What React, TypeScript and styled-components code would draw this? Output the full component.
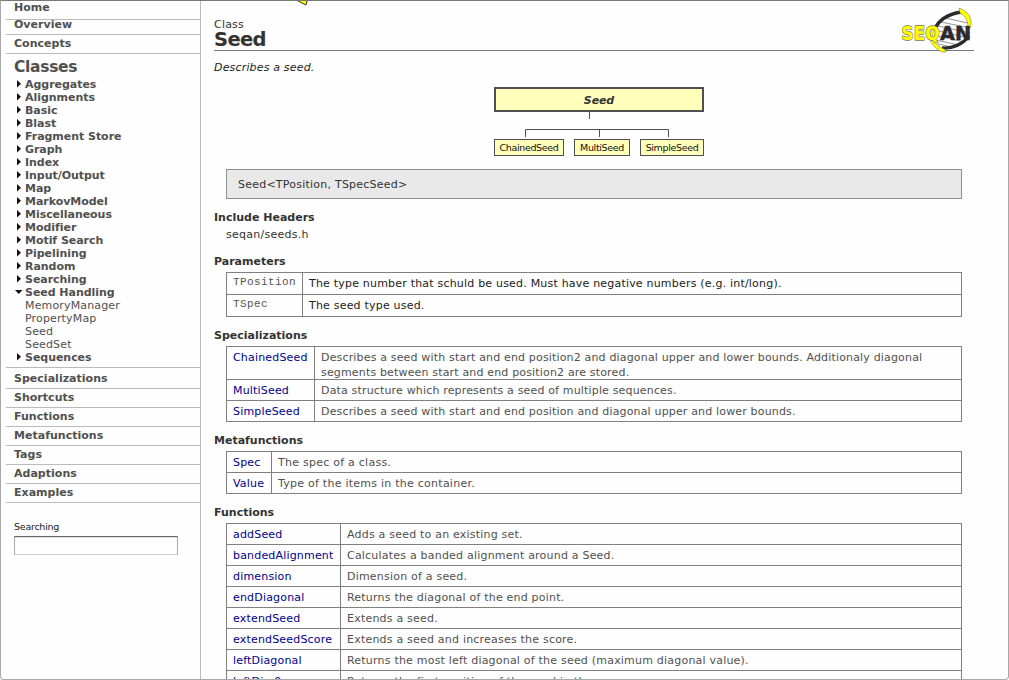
import React from 'react';
import styled, { createGlobalStyle } from 'styled-components';

const GlobalStyle = createGlobalStyle`
  *, *::before, *::after { box-sizing: border-box; }
  body { margin: 0; background: #fff; }
`;

const Frame = styled.div`
  display: flex;
  width: 1009px;
  height: 680px;
  overflow: hidden;
  border: 1px solid #a8a8a8;
  border-top-color: #777;
  border-radius: 0 0 4px 4px;
  background: #fefefe;
  font-family: 'DejaVu Sans', Verdana, sans-serif;
  font-size: 11px;
  color: #333;
  white-space: nowrap;
`;

const Sidebar = styled.nav`
  flex: none;
  width: 200px;
  padding-left: 5px;
  border-right: 1px solid #bbb;
  color: #505050;
`;

const NavLink = styled.div<{ $height?: number; $line?: number }>`
  height: ${(p) => p.$height ?? 19}px;
  padding-left: 8px;
  border-bottom: 1px solid #bbb;
  font-weight: bold;
  line-height: ${(p) => p.$line ?? 18}px;
  letter-spacing: 0.02px;
`;

const NavGroup = styled.div`
  padding: 0 0 3px 8px;
  border-bottom: 1px solid #bbb;
`;

const NavTitle = styled.div`
  height: 24px;
  font-size: 15.5px;
  font-weight: bold;
  line-height: 27px;
  letter-spacing: -0.3px;
`;

const TreeItem = styled.div<{ $leaf?: boolean }>`
  display: flex;
  height: 13px;
  line-height: 13px;
  font-weight: ${(p) => (p.$leaf ? 'normal' : 'bold')};
  letter-spacing: ${(p) => (p.$leaf ? 0.15 : -0.04)}px;
`;

const Marker = styled.svg`
  flex: none;
  width: 11px;
  height: 13px;
  fill: #111;
`;

const SearchForm = styled.label`
  display: block;
  padding: 17px 0 0 8px;
  font-size: 9.5px;
  line-height: 14px;
  letter-spacing: -0.25px;
  color: #222;
`;

const SearchInput = styled.input`
  display: block;
  width: 164px;
  height: 19px;
  margin-top: 2px;
  border: 1px solid #aaa;
  border-top: 1px solid #666;
  border-bottom-color: #ccc;
  background: #fff;
  box-shadow: inset 0 1px 1px #ddd;
  outline: none;
`;

const Main = styled.main`
  flex: none;
  width: 773px;
  padding-left: 13px;
`;

const Header = styled.header`
  position: relative;
  height: 50px;
  padding-top: 18px;
  border-bottom: 1px solid #777;
`;

const Kind = styled.div`
  line-height: 12px;
  letter-spacing: 0.2px;
`;

const Title = styled.h1`
  margin: 0;
  font-size: 19.5px;
  line-height: 17px;
  letter-spacing: -0.65px;
`;

const Logo = styled.svg`
  position: absolute;
  right: -4px;
  top: 3px;
  width: 82px;
  height: 54px;
`;

const ClippedArrow = styled.svg`
  position: absolute;
  left: 83px;
  top: 0;
  width: 12px;
  height: 5px;
`;

const Summary = styled.p`
  margin: 9px 0 11px;
  line-height: 16px;
  font-style: italic;
  letter-spacing: 0.17px;
  color: #222;
`;

const Hierarchy = styled.div`
  width: 210px;
  height: 70px;
  margin-left: 280px;
`;

const BaseClass = styled.div`
  height: 25px;
  border: 2px solid #505050;
  background: #ffb;
  text-align: center;
  font-weight: bold;
  font-style: italic;
  line-height: 23px;
  letter-spacing: -0.1px;
`;

const Connectors = styled.svg`
  display: block;
  width: 210px;
  height: 27px;
  fill: none;
  stroke: #505050;
`;

const Subclasses = styled.div`
  display: flex;
  justify-content: space-between;
`;

const Subclass = styled.div<{ $width: number }>`
  width: ${(p) => p.$width}px;
  height: 17px;
  border: 1px solid #505050;
  background: #ffb;
  text-align: center;
  font-size: 9.5px;
  line-height: 15px;
  letter-spacing: -0.35px;
  color: #111;
`;

const Signature = styled.div`
  width: 736px;
  height: 30px;
  margin: 12px 0 0 12px;
  padding-left: 11px;
  border: 1px solid #909090;
  background: #e9e9e9;
  line-height: 29px;
  letter-spacing: 0.23px;
`;

const Heading = styled.h2`
  margin: 10px 0 3px;
  padding-top: 1px;
  font-size: 11px;
  line-height: 15px;
`;

const HeaderFile = styled.div`
  height: 15px;
  padding-left: 12px;
  line-height: 14px;
  letter-spacing: 0.27px;
`;

const Grid = styled.div`
  width: 736px;
  margin-left: 12px;
  border: solid #808080;
  border-width: 1px 1px 0;
`;

const Row = styled.div<{ $height: number; $first: number }>`
  display: grid;
  grid-template-columns: ${(p) => p.$first}px 1fr;
  height: ${(p) => p.$height}px;
  border-bottom: 1px solid #808080;
`;

const Term = styled.div<{ $code?: boolean }>`
  padding-left: 6px;
  border-right: 1px solid #808080;
  font-family: ${(p) => (p.$code ? "'Liberation Mono', monospace" : 'inherit')};
  line-height: ${(p) => (p.$code ? 18 : 21)}px;
  letter-spacing: ${(p) => (p.$code ? 0.4 : 0.18)}px;
  color: ${(p) => (p.$code ? '#555' : '#000090')};
`;

const Detail = styled.div<{ $spacing: number; $dark?: boolean }>`
  padding: 3px 0 0 6px;
  line-height: 15px;
  letter-spacing: ${(p) => p.$spacing}px;
  color: ${(p) => (p.$dark ? '#222' : '#505050')};
`;

const groups = [
  'Aggregates', 'Alignments', 'Basic', 'Blast', 'Fragment Store', 'Graph', 'Index', 'Input/Output', 'Map',
  'MarkovModel', 'Miscellaneous', 'Modifier', 'Motif Search', 'Pipelining', 'Random', 'Searching',
];
const seedClasses = ['MemoryManager', 'PropertyMap', 'Seed', 'SeedSet'];
const sections = ['Shortcuts', 'Functions', 'Metafunctions', 'Tags', 'Adaptions', 'Examples'];

type Entry = { term: string; text: React.ReactNode; height?: number };

const parameters: Entry[] = [
  { term: 'TPosition', text: 'The type number that schuld be used. Must have negative numbers (e.g. int/long).' },
  { term: 'TSpec', text: 'The seed type used.' },
];
const specializations: Entry[] = [
  {
    term: 'ChainedSeed',
    height: 33,
    text: (
      <>
        Describes a seed with start and end position2 and diagonal upper and lower bounds. Additionaly diagonal
        <br />
        segments between start and end position2 are stored.
      </>
    ),
  },
  { term: 'MultiSeed', text: 'Data structure which represents a seed of multiple sequences.' },
  { term: 'SimpleSeed', text: 'Describes a seed with start and end position and diagonal upper and lower bounds.' },
];
const metafunctions: Entry[] = [
  { term: 'Spec', text: 'The spec of a class.' },
  { term: 'Value', text: 'Type of the items in the container.' },
];
const functions: Entry[] = [
  { term: 'addSeed', text: 'Adds a seed to an existing set.' },
  { term: 'bandedAlignment', text: 'Calculates a banded alignment around a Seed.' },
  { term: 'dimension', text: 'Dimension of a seed.' },
  { term: 'endDiagonal', text: 'Returns the diagonal of the end point.' },
  { term: 'extendSeed', text: 'Extends a seed.' },
  { term: 'extendSeedScore', text: 'Extends a seed and increases the score.' },
  { term: 'leftDiagonal', text: 'Returns the most left diagonal of the seed (maximum diagonal value).' },
  { term: 'leftDim0', text: 'Returns the first position of the seed in the query.' },
];

type TableProps = { entries: Entry[]; first: number; spacing?: number; code?: boolean };

function Table({ entries, first, spacing = 0.21, code }: TableProps) {
  return (
    <Grid>
      {entries.map((e) => (
        <Row key={e.term} $height={e.height ?? (code ? 22 : 21)} $first={first}>
          <Term $code={code}>{e.term}</Term>
          <Detail $dark={code} $spacing={spacing}>{e.text}</Detail>
        </Row>
      ))}
    </Grid>
  );
}

function Branch({ label, open }: { label: string; open?: boolean }) {
  return (
    <TreeItem>
      <Marker viewBox="0 0 11 13">
        <path d={open ? 'M1 4H8.5L4.7 8Z' : 'M3 2L7 5.8L3 9.6Z'} />
      </Marker>
      {label}
    </TreeItem>
  );
}

function SeqAnLogo() {
  return (
    <Logo viewBox="0 0 82 54">
      <path d="M36 30C37 20 47 10 63 8L74 22V31C67 41 57 45 47 44C40 42 36 36 36 30Z" fill="#fff" />
      <path
        d="M49 14L72 19M45 18L74 24M42 22L74 29M39 26L72 34M38 31L68 38M39 36L63 41M42 40L56 43"
        stroke="#777"
        strokeWidth="0.8"
      />
      <path d="M39 25C42 17 51 10 65 8" fill="none" stroke="#2d2a2d" strokeWidth="3.4" />
      <path d="M46 44C56 45 67 40 73 32" fill="none" stroke="#2d2a2d" strokeWidth="3.4" />
      <path d="M63 4C72 7 77 14 74.5 24L72 23C72 17 70 13 64 9Z" fill="#ff0" stroke="#666" strokeWidth="0.5" />
      <path d="M40 23C34 31 36 40 49 45.5L50 48L46 48C34 42 30 32 38 23Z" fill="#ff0" stroke="#666" strokeWidth="0.5" />
      <g fontFamily="'DejaVu Sans'" fontWeight="bold" fontSize="19.5" paintOrder="stroke" strokeLinejoin="round">
        <text x="5.5" y="36" textLength="38" lengthAdjust="spacingAndGlyphs" fill="#ff0" stroke="#77774a" strokeWidth="1.3">SEQ</text>
        <text x="44" y="36" textLength="31" lengthAdjust="spacingAndGlyphs" fill="#2d2a2d" stroke="#2d2a2d" strokeWidth="0.6">AN</text>
      </g>
    </Logo>
  );
}

export default function App() {
  return (
    <>
      <GlobalStyle />
      <Frame>
        <Sidebar>
          <NavLink $line={13}>Home</NavLink>
          <NavLink $height={15} $line={9}>Overview</NavLink>
          <NavLink>Concepts</NavLink>
          <NavGroup>
            <NavTitle>Classes</NavTitle>
            {groups.map((g) => <Branch key={g} label={g} />)}
            <Branch label="Seed Handling" open />
            {seedClasses.map((c) => (
              <TreeItem key={c} $leaf><Marker />{c}</TreeItem>
            ))}
            <Branch label="Sequences" />
          </NavGroup>
          <NavLink $height={21} $line={22}>Specializations</NavLink>
          {sections.map((s) => <NavLink key={s}>{s}</NavLink>)}
          <SearchForm>
            Searching
            <SearchInput />
          </SearchForm>
        </Sidebar>
        <Main>
          <Header>
            <ClippedArrow viewBox="0 0 12 5"><path d="M1 0L9 4L10 0" fill="#ff0" stroke="#333" /></ClippedArrow>
            <Kind>Class</Kind>
            <Title>Seed</Title>
            <SeqAnLogo />
          </Header>
          <Summary>Describes a seed.</Summary>
          <Hierarchy>
            <BaseClass>Seed</BaseClass>
            <Connectors viewBox="0 0 210 27">
              <path d="M95.5 0V7M31.5 25V17.5H174.5V25M105.5 17V25" />
            </Connectors>
            <Subclasses>
              <Subclass $width={70}>ChainedSeed</Subclass>
              <Subclass $width={56}>MultiSeed</Subclass>
              <Subclass $width={64}>SimpleSeed</Subclass>
            </Subclasses>
          </Hierarchy>
          <Signature>Seed&lt;TPosition, TSpecSeed&gt;</Signature>
          <Heading>Include Headers</Heading>
          <HeaderFile>seqan/seeds.h</HeaderFile>
          <Heading>Parameters</Heading>
          <Table entries={parameters} first={76} spacing={0.2} code />
          <Heading>Specializations</Heading>
          <Table entries={specializations} first={88} spacing={0.165} />
          <Heading>Metafunctions</Heading>
          <Table entries={metafunctions} first={45} spacing={0.25} />
          <Heading>Functions</Heading>
          <Table entries={functions} first={114} />
        </Main>
      </Frame>
    </>
  );
}
